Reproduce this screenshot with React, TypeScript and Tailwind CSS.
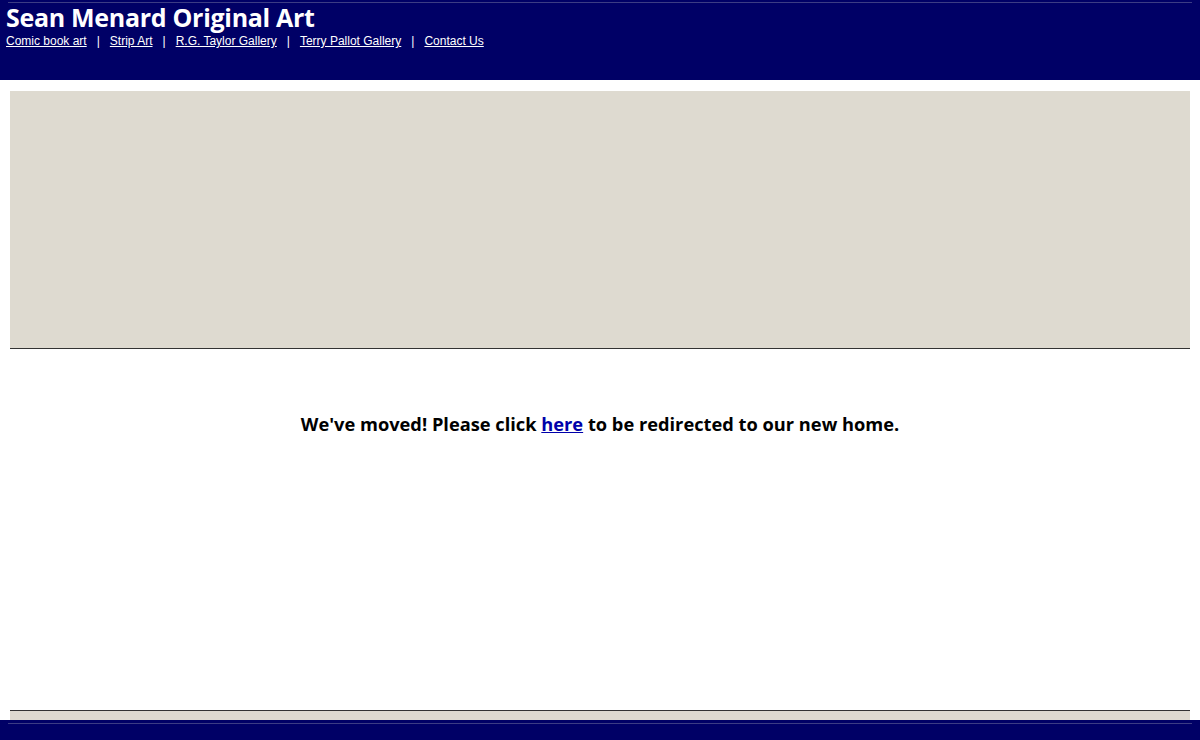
const links = ["Comic book art", "Strip Art", "R.G. Taylor Gallery", "Terry Pallot Gallery", "Contact Us"];

export default function App() {
  return (
    <div className="flex h-[740px] flex-col bg-white">
      {/* header */}
      <div className="h-[80px] bg-[#000066] pt-[2px]">
        <div className="mx-[8px] h-px bg-[#3c3c84]" />
        <h1 className="pl-[6px] font-['Open_Sans',sans-serif] text-[25px] leading-[29px] font-bold text-white tracking-[-0.3px]">
          Sean Menard Original Art
        </h1>
        <div className="mt-px flex pl-[6px] font-['Liberation_Sans',Arial,sans-serif] text-[12px] leading-[16px] text-white">
          {links.map((l, i) => (
            <span key={l} className="flex">
              {i > 0 && <span className="px-[10px]">|</span>}
              <a href="#" className="underline">{l}</a>
            </span>
          ))}
        </div>
      </div>

      {/* banner */}
      <div className="mx-[10px] mt-[11px] h-[258px] border-b border-[#333333] bg-[#dedad0]" />

      {/* body */}
      <div className="flex-1 pt-[61px] text-center font-['Open_Sans',sans-serif] text-[18.25px] font-bold text-black">
        We've moved! Please click{" "}
        <a href="#" className="text-[#0000aa] underline">here</a> to be redirected to our new home.
      </div>

      {/* footer */}
      <div className="mx-[10px] h-[10px] border-t border-[#333333] bg-[#dedad0]" />
      <div className="h-[20px] bg-[#000066] pt-[3px]">
        <div className="mx-[8px] h-px bg-[#3c3c84]" />
      </div>
    </div>
  );
}
